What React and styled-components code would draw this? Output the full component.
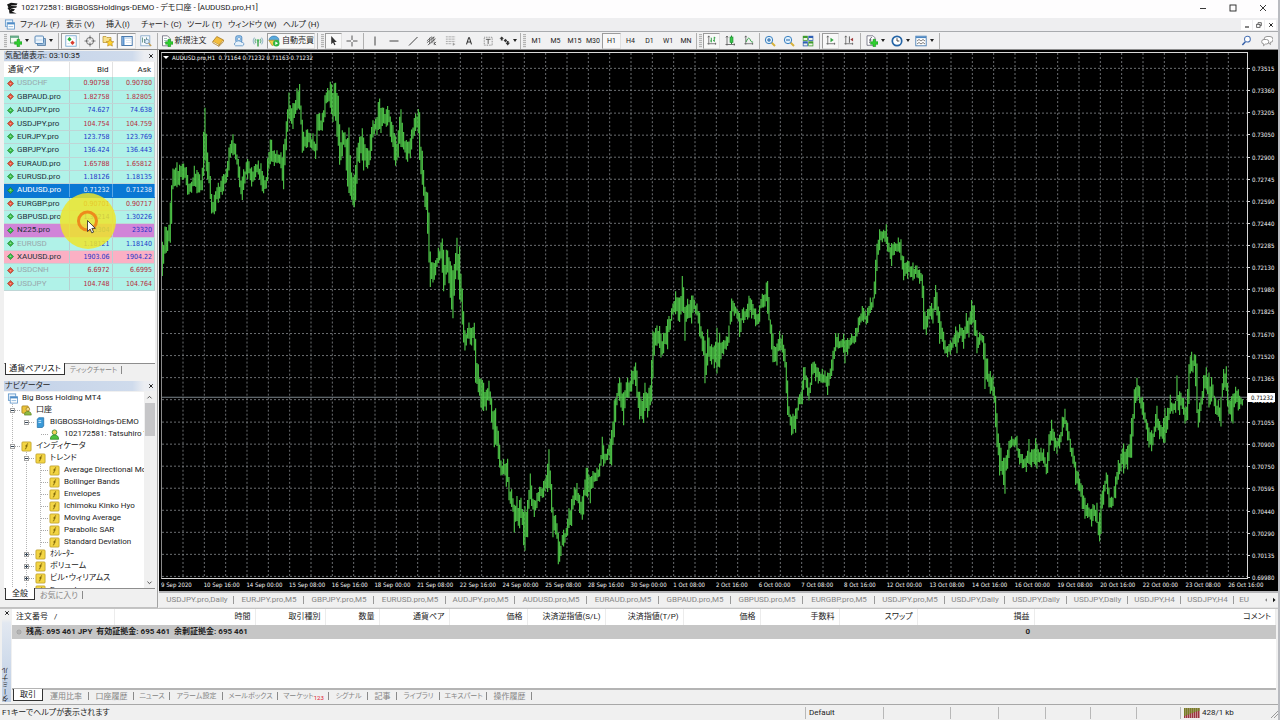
import React from 'react';
import styled, { createGlobalStyle, css } from 'styled-components';

const UI = "Roboto, 'Noto Sans CJK JP', sans-serif";
const SMALL = "'DejaVu Sans Condensed', 'DejaVu Sans', sans-serif";

const Global = createGlobalStyle`
  * { box-sizing: border-box; }
  body {
    margin: 0;
    background: #f0f0f0;
    font-family: ${UI};
    font-size: 8px;
    line-height: 12px;
    color: #222;
    font-feature-settings: 'palt';
  }
  button { font: inherit; font-feature-settings: inherit; color: inherit; border: 0; margin: 0; padding: 0; background: none; white-space: nowrap; }
  ul { list-style: none; margin: 0; padding: 0; }
  svg { display: block; flex: none; }
`;

/* ---------- window shell ---------- */

const Window = styled.div`
  display: flex;
  flex-direction: column;
  min-height: 100vh;
  overflow: hidden;
  border-right: 2px solid #b9bbc0;
`;

const TitleBar = styled.header`
  display: flex;
  align-items: center;
  height: 18px;
  padding: 0 0 2px 6px;
  background: #fefdfe;
`;

const TitleText = styled.h1`
  flex: 1;
  margin: 0 0 0 3px;
  font-size: 8px;
  font-weight: 400;
  line-height: 16px;
  white-space: nowrap;
`;

const CaptionButton = styled.button`
  display: grid;
  place-items: center;
  width: 30px;
  height: 16px;
`;

const MenuBar = styled.nav`
  display: flex;
  align-items: center;
  height: 13px;
  padding: 0 2px 0 4px;
  background: #eeeef0;
`;

const MenuButton = styled.button`
  width: ${(p) => p.$w}px;
  text-align: left;
  line-height: 12px;
`;

const MdiButton = styled.button`
  display: grid;
  place-items: center;
  width: 11px;
  height: 10px;
  margin-left: 1px;
  background: #fff;
`;

const Spacer = styled.div`flex: 1;`;

const ToolBar = styled.div`
  display: flex;
  align-items: center;
  height: 19px;
  padding-left: 3px;
  border-top: 1px solid #a9abae;
  border-bottom: 1px solid #8c8c8c;
  background: #f1f1f2;
`;

const Grip = styled.span`
  flex: none;
  width: 3px;
  height: 14px;
  margin: 0 1px;
  background: repeating-linear-gradient(#b4b4b4 0 1px, #e6e6e6 1px 2px);
`;

const Separator = styled.span`
  flex: none;
  width: 1px;
  height: 16px;
  margin: 0 ${(p) => p.$m ?? 2}px;
  background: #b0b0b0;
`;

const ToolButton = styled.button`
  display: flex;
  flex: none;
  align-items: center;
  justify-content: center;
  gap: ${(p) => (p.$label ? 2 : 3)}px;
  width: ${(p) => p.$w || 19}px;
  height: 16px;
  font-size: ${(p) => (p.$label ? 8 : 7)}px;
  ${(p) => p.$on && css`
    border: 1px solid #e0e0e0;
    border-top-color: #9c9c9c;
    border-left-color: #9c9c9c;
    background: #f8f8f8;
  `}
`;

const Caret = styled.i`
  width: 0;
  height: 0;
  border: 2px solid transparent;
  border-top: 3px solid #222;
  border-bottom: 0;
`;

/* ---------- side panels ---------- */

const Main = styled.main`
  display: flex;
  flex: 1;
`;

const Side = styled.aside`
  display: flex;
  flex-direction: column;
  width: 158px;
  flex: none;
  padding: 1px 2px 6px 4px;
  border-right: 1px solid #a2a2a2;
  border-bottom: 1px solid #c2c2c2;
  background: #f0f0f0;
`;

const Panel = styled.section`
  display: flex;
  flex-direction: column;
  min-height: 0;
  flex: ${(p) => (p.$grow ? '1 0 auto' : 'none')};
  margin-top: ${(p) => p.$gap || 0}px;
`;

const PanelCaption = styled.div`
  display: flex;
  align-items: center;
  justify-content: space-between;
  height: 10px;
  padding-left: 1px;
  background: linear-gradient(90deg, #c3d2e8, #cfdbec 85%, #eceef2 93%);
`;

const PanelTitle = styled.h2`
  margin: 0;
  font-size: 8px;
  font-weight: 400;
  line-height: 10px;
  white-space: nowrap;
`;

const CloseButton = styled.button`
  display: grid;
  place-items: center;
  width: 8px;
  height: 8px;
`;

const WhiteBox = styled.div`
  display: flex;
  flex: 1;
  min-height: 0;
  margin-top: 1px;
  background: #fff;
  border-bottom: 1px solid #8e8e8e;
`;

const QuoteTable = styled.table`
  width: 100%;
  align-self: flex-start;
  table-layout: fixed;
  border-collapse: collapse;
`;

const QuoteHead = styled.th`
  width: ${(p) => p.$w};
  height: 15px;
  padding: 0 3px 0 4px;
  font-weight: 400;
  text-align: ${(p) => (p.$num ? 'right' : 'left')};
  line-height: 13px;
  border-right: 1px solid #e2e2e2;
`;

const QuoteRow = styled.tr`
  height: 13px;
  &:nth-child(3n) { height: 14px; }
  background: ${(p) => p.$bg};
`;

const QuoteCell = styled.td`
  padding: 0 2px 0 0;
  line-height: 12px;
  white-space: nowrap;
  font-family: ${(p) => (p.$num ? SMALL : UI)};
  font-size: ${(p) => (p.$num ? 7 : 8)}px;
  text-align: ${(p) => (p.$num ? 'right' : 'left')};
  color: ${(p) => p.$c};
  border-right: 1px solid ${(p) => (p.$sel ? '#5aa6e6' : '#b9cfd0')};
  border-bottom: 1px solid ${(p) => (p.$sel ? '#0a78d4' : '#bfd6d6')};
`;

const SymbolName = styled.span`
  display: flex;
  align-items: center;
  gap: 3px;
  padding-left: 3px;
`;

const PanelTabs = styled.div`
  display: flex;
  height: 12px;
  padding-left: 1px;
`;

const PanelTab = styled.button`
  height: 12px;
  width: ${(p) => p.$w}px;
  line-height: 11px;
  font-size: ${(p) => (p.$small ? 7 : 8)}px;
  color: ${(p) => (p.$on ? '#111' : '#858585')};
  ${(p) => p.$on
    ? css`
        margin-top: -1px;
        background: #fff;
        border: 1px solid #333;
        border-top: 0;
      `
    : css`
        background: linear-gradient(#8a8a8a, #8a8a8a) right center / 1px 8px no-repeat;
      `}
`;

const Tree = styled.ul`
  flex: 1;
  height: 196px;
  overflow: hidden;
`;

const TreeItem = styled.li`
  display: flex;
  align-items: center;
  height: 12px;
  padding-left: 3px;
  white-space: nowrap;
`;

const Guide = styled.span`
  position: relative;
  flex: none;
  width: 14px;
  height: 12px;
  background: ${(p) => (p.$line
    ? 'repeating-linear-gradient(#b5b5b5 0 1px, transparent 1px 2px) 5px 0 / 1px 100% no-repeat'
    : 'none')};
  ${(p) => p.$branch && css`
    &::after {
      content: '';
      position: absolute;
      left: 6px;
      right: 1px;
      top: 6px;
      border-top: 1px dotted #a8a8a8;
    }
  `}
`;

const Expander = styled.button`
  position: absolute;
  z-index: 1;
  left: 3px;
  top: 4px;
  width: 5px;
  height: 5px;
  outline: 1px solid #a4a4a4;
  outline-offset: -1px;
  background:
    linear-gradient(#345, #345) center / 3px 1px no-repeat,
    ${(p) => (p.$plus ? 'linear-gradient(#345, #345) center / 1px 3px no-repeat,' : '')}
    #fff;
`;

const TreeLabel = styled.span`
  margin-left: 4px;
`;

const ScrollBar = styled.div`
  display: flex;
  flex-direction: column;
  align-items: center;
  width: 11px;
  background: #f0f0f0;
`;

const Thumb = styled.div`
  width: 10px;
  height: 33px;
  margin-bottom: auto;
  background: #c6c6c8;
`;

const ScrollButton = styled.button`
  display: grid;
  place-items: center;
  width: 11px;
  height: 11px;
`;

/* ---------- chart ---------- */

const Work = styled.div`
  display: flex;
  flex-direction: column;
  flex: 1;
  min-width: 0;
  padding-left: 1px;
`;

const ChartFrame = styled.section`
  display: grid;
  flex: 1;
  grid-template-columns: 1fr 30px;
  grid-template-rows: 1fr 12px;
  padding: 2px 0 0 2px;
  background: #000;
  border-bottom: 2px solid #b5b5b8;
  font-family: ${SMALL};
  font-size: 6px;
  line-height: 9px;
  color: #f8f8f8;
`;

const Plot = styled.div`
  position: relative;
  grid-area: 1 / 1;
  min-height: 525px;
  border: 1px solid #d8d8d8;
  border-left-color: #8a8a8a;
`;

const PlotSvg = styled.svg`
  position: absolute;
  inset: 0;
  width: 100%;
  height: 100%;
`;

const ChartTitle = styled.div`
  position: absolute;
  top: 0;
  left: 1px;
  display: flex;
  align-items: center;
  gap: 3px;
  white-space: pre;
`;

const WhiteCaret = styled(Caret)`
  border-width: 3px;
  border-top: 3px solid #fff;
  border-bottom: 0;
`;

const PriceAxis = styled.ol`
  grid-area: 1 / 2;
  display: flex;
  flex-direction: column;
  justify-content: space-between;
  list-style: none;
  margin: 0 0 -3px;
  padding: 12px 0 0;
`;

const PriceLabel = styled.li`
  display: flex;
  align-items: center;
  gap: 2px;
  &::before { content: ''; width: 2px; height: 1px; background: #ddd; }
`;

const PriceFlag = styled.div`
  position: absolute;
  left: 100%;
  top: 65%;
  width: 28px;
  padding-left: 4px;
  margin-top: -1px;
  background: #fff;
  color: #000;
`;

const TimeAxis = styled.ol`
  grid-area: 2 / 1 / 3 / 3;
  display: flex;
  list-style: none;
  margin: 0 7px 0 0;
  padding: 0;
  line-height: 11px;
`;

const TimeLabel = styled.li`
  flex: 1 1 0;
  min-width: 0;
  white-space: nowrap;
`;

const ChartTabs = styled.div`
  display: flex;
  align-items: center;
  height: 15px;
  padding-left: 1px;
  border-bottom: 1px solid #e2e2e2;
  background: #f0f0f0;
  overflow: hidden;
`;

const ChartTab = styled.button`
  flex: none;
  width: ${(p) => p.$w}px;
  color: #858585;
  line-height: 12px;
  background: linear-gradient(#9a9a9a, #9a9a9a) right center / ${(p) => (p.$last ? 0 : 1)}px 8px no-repeat;
`;

/* ---------- terminal ---------- */

const Terminal = styled.section`
  display: flex;
  border-top: 1px solid #c4c4c4;
  border-bottom: 1px solid #a8a8a8;
  padding: 0 2px 2px 2px;
`;

const TerminalRail = styled.div`
  display: flex;
  flex-direction: column;
  align-items: center;
  justify-content: space-between;
  width: 9px;
  margin-right: 1px;
  background: linear-gradient(#f0f0f0 10px, #e2e8f1 14px, #bccde4);
`;

const TerminalName = styled.h2`
  margin: 0;
  writing-mode: vertical-rl;
  transform: rotate(180deg);
  font-size: 7px;
  font-weight: 400;
  line-height: 9px;
`;

const TerminalBody = styled.div`
  display: flex;
  flex: 1;
  flex-direction: column;
  min-width: 0;
`;

const OrdersBox = styled.div`
  height: 81px;
  background: #fff;
  border-bottom: 2px solid #b4b4b4;
`;

const OrdersTable = styled.table`
  width: 100%;
  table-layout: fixed;
  border-collapse: collapse;
`;

const OrdersHead = styled.th`
  width: ${(p) => (p.$w ? `${p.$w}px` : 'auto')};
  height: 16px;
  padding: 0 4px;
  text-align: ${(p) => (p.$left ? 'left' : 'right')};
  font-weight: 400;
  line-height: 14px;
  border-right: 1px solid #ececec;
  white-space: pre;
`;

const SummaryRow = styled.tr`
  height: 14px;
  background: #c6c6c6;
  font-weight: 700;
`;

const SummaryCell = styled.td`
  padding: 0 4px;
  text-align: ${(p) => (p.$num ? 'right' : 'left')};
  white-space: pre;
`;

const Summary = styled.span`
  display: flex;
  align-items: center;
  gap: 4px;
`;

const Count = styled.sub`
  font-size: 6px;
  line-height: 6px;
  color: #e02030;
`;

const StatusBar = styled.footer`
  display: flex;
  align-items: center;
  height: 15px;
  background: #f0f0f0;
`;

const StatusCell = styled.div`
  display: flex;
  align-items: center;
  gap: 2px;
  width: ${(p) => (p.$w ? `${p.$w}px` : 'auto')};
  flex: ${(p) => (p.$w ? 'none' : 1)};
  height: 12px;
  padding-left: ${(p) => (p.$w ? 3 : 1)}px;
  white-space: nowrap;
  border-left: 1px solid ${(p) => (p.$w ? '#b8b8b8' : 'transparent')};
`;

const Highlight = styled.svg`
  position: absolute;
  left: 58px;
  top: 191px;
  pointer-events: none;
`;

/* ---------- icons, all on a 12 unit square ---------- */

const fBadge = (
  <>
    <rect x="1" y="1" width="10" height="10" rx="1" fill="#f3d545" stroke="#b99a22" strokeWidth=".8" />
    <path d="M7.8 3.2C6.4 2.8 6.3 4 6 5.4S5.6 9.2 4.2 8.8M4.6 5.4h2.8" fill="none" stroke="#6d5500" strokeWidth=".9" />
  </>
);

const axes = <path d="M3 1v9.5M1.5 9.5h9.5M2 2.5L3 1l1 1.5M9.8 8.5l1.2 1-1.2 1" fill="none" stroke="#555" strokeWidth=".8" />;
const plus = <path d="M7 4.300h2.600v2.400H12v2.600H9.600v2.400H7V9.300H4.600V6.700H7z" fill="#2fcf2f" stroke="#128a1a" strokeWidth=".5" />;

const ICONS = {
  app: (
    <g fill="#151515">
      <path d="M1 2.500L5 .8l6.500.6-1 1.800-5 .3-3 2zM1.500 6l3.500-2 6 .2-.8 1.500-4 .3-3 2.600z" />
      <path d="M3 8.500L6 6.500l3 .7L7.600 9l-2 .5 5 2H3.500z" />
    </g>
  ),
  windows: (
    <>
      <rect x="1.500" y="1" width="8" height="7" fill="#e9f3fc" stroke="#5f95c8" strokeWidth=".9" />
      <rect x="3.500" y="4" width="8" height="7" fill="#fff" stroke="#5f95c8" strokeWidth=".9" />
      <path d="M3.500 5h8" stroke="#4e8cc7" strokeWidth="1.800" />
      <path d="M5 8.300h5" stroke="#8fb8dc" />
    </>
  ),
  newChart: (
    <>
      <rect x=".5" y="1" width="8" height="7" fill="#f4faf2" stroke="#5a9a70" strokeWidth=".8" />
      <path d="M.5 2h8" stroke="#4c9e78" strokeWidth="1.500" />
      {plus}
    </>
  ),
  profiles: (
    <>
      <path d="M3.500 3.500h8v7h-8z" fill="#9bbcdc" stroke="#52799e" strokeWidth=".8" />
      <rect x="1" y="1" width="8.500" height="7.500" rx="1" fill="#eaf3fb" stroke="#4d7fb0" strokeWidth=".9" />
      <path d="M2 5h6.500" stroke="#b9d2ea" />
    </>
  ),
  watch: (
    <>
      <rect x=".8" y=".8" width="10.400" height="10.400" fill="#fff" stroke="#68a0cc" strokeWidth=".8" />
      <path d="M4.500 2l2.200 2.200-2.200 2.200-2.200-2.200z" fill="#25b03c" />
      <path d="M7.500 5.500l2.200 2.200-2.200 2.200-2.200-2.200z" fill="#d83c2c" />
      <path d="M8 3h2M2.500 8.500h2" stroke="#c4d6e4" strokeWidth=".8" />
    </>
  ),
  target: <g fill="none" stroke="#555" strokeWidth=".8"><circle cx="6" cy="6" r="3.600" /><path d="M6 .5v4M6 7.500v4M.5 6h4M7.500 6h4" /></g>,
  folderStar: (
    <>
      <path d="M1 1.500h3l1 1h4v5H1z" fill="#f8e08a" stroke="#b48e28" strokeWidth=".7" />
      <path d="M8 4l1.200 2.400 2.600.3-1.900 1.800.5 2.600L8 9.900l-2.400 1.200.5-2.600-1.900-1.800 2.600-.3z" fill="#ffd22e" stroke="#b08216" strokeWidth=".6" />
    </>
  ),
  terminal: (
    <>
      <rect x=".8" y="1.500" width="10.400" height="9" fill="#fff" stroke="#3a6ea5" strokeWidth=".9" />
      <path d="M1.300 2h2.200v8H1.300z" fill="#5b94d0" />
      <path d="M4 3h7" stroke="#9cc0e2" /><path d="M5 5.500h5M5 7.500h5" stroke="#d4e2f0" strokeWidth=".7" />
    </>
  ),
  tester: (
    <>
      <rect x=".8" y=".8" width="9" height="10" fill="#f5f9fd" stroke="#7fa3c6" strokeWidth=".8" />
      <path d="M2.500 2.500v5M4.500 4v4M6.500 2.500v3" stroke="#6f9b8c" />
      <circle cx="7" cy="6.500" r="2.200" fill="#dcecf8" stroke="#6d8dac" strokeWidth=".8" />
      <path d="M8.600 8.200l2.600 2.800" stroke="#c39a4a" strokeWidth="1.200" />
    </>
  ),
  order: (
    <>
      <path d="M1.500.8h5l2.500 2.500v7.500h-7.500z" fill="#fff" stroke="#667" strokeWidth=".8" />
      <path d="M3 3.500h3M3 5.500h4M3 7.500h2" stroke="#8aa" strokeWidth=".7" />
      {plus}
    </>
  ),
  book: <><path d="M.8 6.500l4-5 6.800 3.500-4.600 5z" fill="#f2bd3d" stroke="#9d6d12" strokeWidth=".7" /><path d="M.8 6.500v1.300l6.200 3.500V10M7 11.300L11.600 6.500V5" fill="#fff3cf" stroke="#9d6d12" strokeWidth=".7" /></>,
  cloud: (
    <>
      <rect x="2.800" y=".8" width="6" height="6.500" rx="1.500" fill="#9cc9ef" stroke="#3d7ab5" strokeWidth=".8" />
      <circle cx="6" cy="4" r="1.500" fill="#fff" stroke="#3d7ab5" strokeWidth=".5" />
      <path d="M2.500 10.800a2 2 0 010-3.500 3.500 3 0 016 0 1.800 1.800 0 011 3.500z" fill="#e6f1fb" stroke="#5b8fc2" strokeWidth=".8" />
    </>
  ),
  signal: (
    <g fill="none" strokeWidth="1.100">
      <path d="M2.600 9.400a4.800 4.800 0 010-6.800M9.400 2.600a4.800 4.800 0 010 6.800" stroke="#9dbccb" />
      <path d="M4 8a2.900 2.900 0 010-4M8 4a2.900 2.900 0 010 4" stroke="#6fb08c" />
      <path d="M6 6v5.500" stroke="#3aa04a" strokeWidth="1.400" /><circle cx="6" cy="5.500" r="1.300" fill="#4bb85c" stroke="none" />
    </g>
  ),
  auto: (
    <>
      <path d="M1 5.500C1 2.500 3.500 1 6 1s5 1.500 5 4.500H1z" fill="#58a9dd" stroke="#2b6fa4" strokeWidth=".6" />
      <path d="M.8 5.200h9L7 9.500 4 10.500z" fill="#f3cf48" stroke="#a8841c" strokeWidth=".6" />
      <circle cx="8.300" cy="8.300" r="3.200" fill="#2fb541" /><path d="M7.300 6.500v3.600l2.800-1.800z" fill="#fff" />
    </>
  ),
  cursor: <path d="M3.500 1v9l2-1.900 1.400 3 1.300-.6-1.400-2.900h2.800z" fill="#333" />,
  cross: <path d="M6 .5v4.500M6 7v4.500M.5 6H5M7 6h4.500" stroke="#444" strokeWidth=".9" />,
  vline: <path d="M6 1.500v9" stroke="#444" />,
  hline: <path d="M1.500 6h9" stroke="#444" />,
  trend: <path d="M2 10.500L10.500 2" stroke="#444" />,
  channel: <g fill="none" stroke="#444" strokeWidth=".8"><path d="M1 8.500L9 2M2 11L10.500 4M1 6.500L6 2M4 3v7M6.500 2v7M8.500 2v5" /><path d="M9 7.500v3.500M9 9.500l2-2M9 9l2 2" /></g>,
  fibo: <g stroke="#777" strokeWidth=".8" strokeDasharray="1 .6"><path d="M1 2h10M1 4.500h10M1 7h10M1 9.500h6" /><path d="M9 8.500v3M9 10h2" strokeDasharray="none" /></g>,
  letter: <path d="M3 10L5.600 2h.9L9 10M4 7.200h4" fill="none" stroke="#333" strokeWidth="1.300" />,
  textBox: <g fill="none" stroke="#444"><rect x="1.500" y="1.500" width="9.500" height="9.500" strokeWidth=".8" strokeDasharray="1 1" /><path d="M3.500 4h5.500M6.200 4v5.500" /></g>,
  shapes: <g fill="#333"><path d="M3 1.500L5.500 4H4v2H2V4H.5zM5 6l2-2 2 2-2 2z" /><path d="M8.500 6.500v2H7L9.500 11.500 12 8.500h-1.500v-2z" /></g>,
  bars: <>{axes}<path d="M5.800 3v5M4.600 6.500h1.200M9 2v5.500M9 3h1.200M7.800 6H9" stroke="#249a38" fill="none" /></>,
  candles: <>{axes}<path d="M7.500.5v8.500" stroke="#1c8a2e" /><rect x="6" y="2" width="3" height="5.500" fill="#37c44b" stroke="#1c8a2e" strokeWidth=".6" /></>,
  line: <>{axes}<path d="M3.500 7.500C5.500 2 7 3 8 5.500s2 2 3 2.200" stroke="#249a38" fill="none" /></>,
  zoomIn: <><path d="M7.500 7.500l3.500 3.500" stroke="#d8b23a" strokeWidth="2" /><circle cx="5" cy="5" r="3.700" fill="#dff0fc" stroke="#3a80c0" /><path d="M3 5h4M5 3v4" stroke="#2265a8" /></>,
  zoomOut: <><path d="M7.500 7.500l3.500 3.500" stroke="#d8b23a" strokeWidth="2" /><circle cx="5" cy="5" r="3.700" fill="#dff0fc" stroke="#3a80c0" /><path d="M3 5h4" stroke="#2265a8" /></>,
  tile: (
    <>
      <path d="M.8.8h5v5h-5z" fill="#3f9b2e" /><path d="M6.300.8h5v5h-5z" fill="#2d5fb4" />
      <path d="M.8 6.300h5v5h-5z" fill="#2d5fb4" /><path d="M6.300 6.300h5v5h-5z" fill="#3f9b2e" />
      <path d="M1.500 3h3.600v2H1.500zM7 3h3.600v2H7zM1.500 8.500h3.600v2H1.500zM7 8.500h3.600v2H7z" fill="#eef4e6" />
    </>
  ),
  scroll: <>{axes}<path d="M6 3v5l3.500-2.500z" fill="#2fa63e" /></>,
  shift: <>{axes}<path d="M7 1.500v7" stroke="#555" /><path d="M11 3v4L8 5z" fill="#a03a3a" /></>,
  indicator: (
    <>
      <path d="M1 .8h6l2 2v7.500H1z" fill="#fff" stroke="#667" strokeWidth=".8" />
      <path d="M5.800 2.500C4.500 2.300 4.500 3.500 4.300 5S4 8 3 7.800M3 5h2.500" fill="none" stroke="#445" strokeWidth=".8" />
      {plus}
    </>
  ),
  clock: <><circle cx="6" cy="6" r="4.700" fill="#fff" stroke="#2464a6" strokeWidth="1.700" /><path d="M6 3.200V6h2.300" fill="none" stroke="#333" strokeWidth=".9" /></>,
  template: <><rect x=".8" y="1.200" width="10.400" height="9.600" fill="#fff" stroke="#4a7fb4" strokeWidth=".9" /><path d="M1 2.300h10" stroke="#4a86c2" strokeWidth="1.600" /><path d="M2 6l2-1.500L6 6l2-1.500L10 6M2 9l2-1.500L6 9l2-1.500L10 9" fill="none" stroke="#444" strokeWidth=".7" /></>,
  search: <><path d="M5 7L1.500 11" stroke="#3560a8" strokeWidth="1.600" /><circle cx="7" cy="4.500" r="3.200" fill="#fff" stroke="#4a72b4" strokeWidth="1.100" /></>,
  chat: <g fill="#fff" stroke="#8c8c8c" strokeWidth=".9"><path d="M6 1.500h3a2.500 2.500 0 010 6l.5 2-2.500-2H6a3 3 0 010-6z" /><path d="M3 4.500h2.500a2.200 2.200 0 010 4.500H4.500l-2 1.800.3-1.900A2.200 2.200 0 013 4.500z" /></g>,
  minimize: <path d="M3 6.500h6" stroke="#222" strokeWidth=".9" />,
  maximize: <rect x="3" y="3" width="6" height="6" fill="none" stroke="#222" strokeWidth=".9" />,
  restore: <g fill="none" stroke="#444" strokeWidth="1.200"><path d="M4.500 4.500v-2h5v4.500h-2" /><rect x="2.500" y="5" width="5" height="4.500" /></g>,
  close: <path d="M3 3l6 6M9 3l-6 6" stroke="#222" strokeWidth=".9" />,
  closeBold: <path d="M2.500 2.500l7 7M9.500 2.500l-7 7" stroke="#222" strokeWidth="2" />,
  minBold: <path d="M3 9h6" stroke="#333" strokeWidth="1.800" />,
  up: <path d="M2.500 7.500L6 4l3.500 3.500" fill="none" stroke="#444" strokeWidth="1.600" />,
  down: <path d="M2.500 4.500L6 8l3.500-3.500" fill="none" stroke="#444" strokeWidth="1.600" />,
  gain: <><path d="M6 .8L11.200 6 6 11.200.8 6z" fill="#35b944" stroke="#17752a" strokeWidth="1" /><path d="M6 4L8 6.500H4z" fill="#a5eaac" /></>,
  loss: <><path d="M6 .8L11.200 6 6 11.200.8 6z" fill="#e0503a" stroke="#9a2c1c" strokeWidth="1" /><path d="M6 8L8 5.500H4z" fill="#ffb4a4" /></>,
  accounts: <><rect x="1" y="1" width="7" height="8" rx="1" fill="#e9c23a" stroke="#a17c14" strokeWidth=".8" /><circle cx="7.500" cy="4.500" r="2" fill="#f5dc86" stroke="#94701a" strokeWidth=".7" /><path d="M3.800 11c0-3 1.500-4 3.700-4s3.700 1 3.700 4z" fill="#8fb844" stroke="#54801c" strokeWidth=".7" /></>,
  server: <><path d="M2.500 2.500L4 .8h5.500v9L8 11.500H2.500z" fill="#3a9ad8" stroke="#1f6ca6" strokeWidth=".8" /><path d="M3.800 4h3M3.800 6h3" stroke="#cdeaff" /></>,
  user: <><circle cx="6" cy="3.600" r="2.600" fill="#f2d05a" stroke="#3b8a30" strokeWidth=".9" /><path d="M1.500 11.200c0-3.500 2-4.700 4.500-4.700s4.500 1.200 4.500 4.700z" fill="#4cc23f" stroke="#2a8422" strokeWidth=".8" /></>,
  func: fBadge,
  dot: <g fill="none" stroke="#888" strokeWidth="1.200"><circle cx="6" cy="6" r="4" /><path d="M4 6h4" /></g>,
  left: <path d="M8 2.500v7L4 6z" fill="#888" />,
  right: <path d="M4 1.500v9L9 6z" fill="#111" />,
};

const Icon = ({ n, s = 12 }) => (
  <svg width={s} height={s} viewBox="0 0 12 12" aria-hidden="true">{ICONS[n]}</svg>
);

const Tool = ({ n, s, label, text, menu, on, w }) => (
  <ToolButton $w={w} $on={on} $label={!!text} aria-label={label} aria-pressed={on ? true : undefined}>
    {n && <Icon n={n} s={s} />}
    {text}
    {menu && <Caret />}
  </ToolButton>
);

/* ---------- data ---------- */

const MENUS = [['ファイル (F)', 46], ['表示 (V)', 40], ['挿入(I)', 35], ['チャート (C)', 46], ['ツール (T)', 41], ['ウィンドウ (W)', 55], ['ヘルプ (H)', 40]];

const QUOTES = [
  ['USDCHF', '0.90758', '0.90780', 0, 'off'],
  ['GBPAUD.pro', '1.82758', '1.82805', 0],
  ['AUDJPY.pro', '74.627', '74.638', 1],
  ['USDJPY.pro', '104.754', '104.759', 0],
  ['EURJPY.pro', '123.758', '123.769', 1],
  ['GBPJPY.pro', '136.424', '136.443', 1],
  ['EURAUD.pro', '1.65788', '1.65812', 0],
  ['EURUSD.pro', '1.18126', '1.18135', 1],
  ['AUDUSD.pro', '0.71232', '0.71238', 1, 'sel'],
  ['EURGBP.pro', '0.90701', '0.90717', 0],
  ['GBPUSD.pro', '1.30214', '1.30226', 1],
  ['N225.pro', '23304', '23320', 1, 'violet'],
  ['EURUSD', '1.18121', '1.18140', 1, 'off'],
  ['XAUUSD.pro', '1903.06', '1904.22', 1, 'pink'],
  ['USDCNH', '6.6972', '6.6995', 0, 'off'],
  ['USDJPY', '104.748', '104.764', 0, 'off'],
];
const ROW_BG = { sel: '#0a78d4', violet: '#d184d8', pink: '#fbb0c4' };

/* depth, icon, label, expander, guide columns that continue below */
const TREE = [
  [0, 'windows', 'Big Boss Holding MT4', '', []],
  [1, 'accounts', '口座', '-', [0]],
  [2, 'server', 'BIGBOSSHoldings-DEMO', '-', [0]],
  [3, 'user', '102172581: Tatsuhiro Y.', '', [0]],
  [1, 'func', 'インディケータ', '-', [0]],
  [2, 'func', 'トレンド', '-', [0, 1]],
  [3, 'func', 'Average Directional Mo', '', [0, 1, 2]],
  [3, 'func', 'Bollinger Bands', '', [0, 1, 2]],
  [3, 'func', 'Envelopes', '', [0, 1, 2]],
  [3, 'func', 'Ichimoku Kinko Hyo', '', [0, 1, 2]],
  [3, 'func', 'Moving Average', '', [0, 1, 2]],
  [3, 'func', 'Parabolic SAR', '', [0, 1, 2]],
  [3, 'func', 'Standard Deviation', '', [0, 1, 2]],
  [2, 'func', 'ｵｼﾚｰﾀｰ', '+', [0, 1]],
  [2, 'func', 'ボリューム', '+', [0, 1]],
  [2, 'func', 'ビル・ウィリアムス', '+', [0, 1]],
  [2, 'func', 'Examples', '+', [0, 1]],
];

const PRICES = ['0.73515', '0.73360', '0.73205', '0.73050', '0.72900', '0.72745', '0.72590', '0.72440', '0.72285', '0.72130', '0.71980', '0.71825', '0.71670', '0.71520', '0.71365', '0.71210', '0.71055', '0.70900', '0.70750', '0.70595', '0.70440', '0.70290', '0.70135', '0.69980'];

const TIMES = ['9 Sep 2020', '10 Sep 16:00', '14 Sep 00:00', '15 Sep 08:00', '16 Sep 16:00', '18 Sep 00:00', '21 Sep 08:00', '22 Sep 16:00', '24 Sep 00:00', '25 Sep 08:00', '28 Sep 16:00', '30 Sep 00:00', '1 Oct 08:00', '2 Oct 16:00', '6 Oct 00:00', '7 Oct 08:00', '8 Oct 16:00', '12 Oct 00:00', '13 Oct 08:00', '14 Oct 16:00', '16 Oct 00:00', '19 Oct 08:00', '20 Oct 16:00', '22 Oct 00:00', '23 Oct 08:00', '26 Oct 16:00'];

const CHART_TABS = [['USDJPY.pro,Daily', 74], ['EURJPY.pro,M5', 70], ['GBPJPY.pro,M5', 70], ['EURUSD.pro,M5', 72], ['AUDJPY.pro,M5', 69], ['AUDUSD.pro,M5', 72], ['EURAUD.pro,M5', 72], ['GBPAUD.pro,M5', 72], ['GBPUSD.pro,M5', 72], ['EURGBP.pro,M5', 72], ['USDJPY.pro,M5', 70], ['USDJPY,Daily', 60], ['USDJPY,Daily', 62], ['USDJPY,Daily', 61], ['USDJPY,H4', 53], ['USDJPY,H4', 53]];

const ORDER_COLUMNS = [['注文番号   /', 102], ['時間', 141], ['取引種別', 70], ['数量', 54], ['通貨ペア', 70], ['価格', 78], ['決済逆指値(S/L)', 78], ['決済指値(T/P)', 78], ['価格', 77], ['手数料', 79], ['スワップ', 78], ['損益', 117], ['コメント', 0]];

const TERMINAL_TABS = [['運用比率', 46], ['口座履歴', 45], ['ニュース', 36, 1], ['アラーム設定', 53, 1], ['メールボックス', 55, 1], ['マーケット', 51, 1], ['シグナル', 39, 1], ['記事', 29], ['ライブラリ', 43, 1], ['エキスパート', 47, 1], ['操作履歴', 45]];

/* price envelope: x, high, low in plot units */
const ENVELOPE = `162,243,278 165,226,253 167,227,252 168,232,250 171,193,240 173,168,188 175,170,185 177,162,187 180,165,185 183,163,178 186,165,183 188,177,197 192,182,192 194,165,185 197,170,193 199,173,192 202,178,193 203,143,183 205,107,160 207,148,177 209,162,183 211,183,207 212,200,217 215,193,213 218,183,203 223,175,193 227,167,180 229,147,170 233,134,155 236,145,160 239,163,183 242,178,202 244,167,187 248,158,178 252,168,187 255,165,178 258,160,173 261,163,185 263,175,194 267,177,187 268,147,177 271,137,160 274,150,166 277,150,163 281,152,168 283,160,187 284,135,190 287,117,138 289,92,118 293,103,129 297,88,110 298,93,108 300,82,110 302,117,153 304,135,150 307,128,147 310,133,147 313,133,150 316,145,160 317,113,150 320,113,128 322,115,132 325,95,117 328,87,100 331,80,110 333,93,122 335,78,113 337,93,137 339,97,150 340,140,173 342,130,157 345,132,147 347,143,183 349,127,193 351,170,197 353,177,205 355,173,208 357,147,183 360,135,160 362,126,158 364,140,173 367,150,165 368,147,170 371,130,157 373,120,137 377,117,135 379,94,127 381,108,133 383,107,122 386,110,127 388,105,125 391,120,140 393,125,147 395,137,167 398,133,160 400,113,140 401,109,147 403,130,147 407,142,162 410,140,160 412,127,147 415,115,132 418,108,127 420,113,167 423,162,190 425,187,207 428,193,237 429,213,263 430,250,287 433,262,282 435,263,278 438,248,263 441,242,258 443,236,280 444,257,297 447,247,267 449,257,283 451,263,305 453,270,318 455,260,283 457,237,270 460,247,303 462,283,320 464,317,347 465,330,350 469,322,338 471,330,347 474,318,337 475,332,380 478,362,390 481,378,407 483,380,410 486,390,411 489,380,400 492,400,425 494,410,447 496,407,443 499,437,463 501,460,475 504,458,473 506,463,487 508,457,480 509,477,500 512,490,507 514,505,533 517,495,520 519,500,532 521,497,517 524,513,548 525,505,550 527,507,547 530,470,497 532,488,507 534,500,517 537,492,507 540,485,500 543,482,497 547,470,493 549,448,487 551,472,500 553,507,537 556,515,533 558,530,564 560,543,560 563,530,547 567,523,538 569,507,527 572,497,525 574,487,505 577,482,500 579,493,510 582,497,520 584,487,512 586,467,495 588,467,497 590,477,504 593,470,487 597,467,480 600,462,475 602,434,457 604,447,467 607,450,458 610,440,463 612,427,465 614,400,440 616,397,417 619,375,397 621,382,407 624,393,427 627,375,397 629,382,397 632,368,390 635,358,380 637,370,397 639,390,417 643,397,428 645,382,410 647,395,420 649,387,410 651,373,412 653,330,377 657,325,345 659,322,343 661,333,357 664,332,352 666,327,343 668,317,350 671,310,323 673,303,314 675,289,312 678,297,320 680,297,322 682,273,310 684,290,313 685,307,341 688,297,315 691,295,328 693,295,312 697,303,315 699,307,333 702,330,347 705,340,383 707,340,373 708,322,360 711,343,363 714,347,367 717,327,373 720,333,366 723,340,355 726,337,350 729,325,342 731,297,323 734,302,315 737,308,318 740,313,339 743,307,323 747,307,320 749,295,317 752,300,318 755,308,326 759,308,325 762,293,307 764,295,307 767,273,310 769,297,320 771,320,343 773,333,362 777,343,365 779,330,350 782,332,350 784,347,363 787,350,413 788,397,415 791,417,435 793,413,433 796,407,432 798,398,410 802,383,407 804,363,385 807,373,393 809,387,400 811,377,397 812,355,377 815,362,380 818,367,383 822,368,382 825,370,382 828,372,396 831,363,378 833,350,370 836,330,348 838,332,348 841,340,347 843,330,347 845,340,363 848,337,353 852,333,343 855,330,344 858,318,333 862,305,320 864,308,322 867,310,325 870,297,313 873,297,307 875,267,305 877,243,270 879,228,252 882,232,242 886,221,242 888,240,253 892,243,267 894,242,255 898,237,250 901,239,260 903,255,280 907,260,278 913,262,280 917,265,277 919,268,283 922,273,285 923,277,327 926,317,336 928,307,325 931,300,317 933,308,323 935,281,307 937,292,315 940,313,347 943,327,347 945,340,353 947,347,357 950,340,355 953,337,347 955,324,343 957,330,353 959,323,337 962,327,340 964,330,350 966,312,333 969,317,337 971,299,322 974,302,333 977,330,353 980,332,343 983,332,345 985,343,389 988,360,380 990,370,393 993,375,395 995,387,417 997,413,447 999,440,477 1001,447,470 1003,457,480 1005,457,493 1007,453,473 1009,440,457 1012,435,445 1017,435,450 1019,447,463 1022,453,467 1026,457,472 1029,438,463 1032,450,467 1035,435,463 1037,443,468 1041,447,460 1044,448,463 1047,460,478 1049,433,460 1052,417,437 1054,430,450 1057,440,453 1060,433,447 1062,417,437 1065,408,423 1067,418,437 1070,437,450 1073,447,463 1076,463,487 1078,470,488 1082,483,507 1085,497,518 1088,503,517 1091,510,528 1093,503,520 1097,502,522 1099,520,544 1101,493,533 1104,483,500 1107,468,487 1109,487,507 1112,497,507 1115,480,502 1118,460,480 1121,453,470 1123,442,473 1127,447,472 1130,437,457 1132,413,457 1134,390,420 1137,377,400 1139,383,400 1142,395,413 1144,403,420 1147,420,437 1149,427,447 1152,430,451 1155,417,433 1157,405,427 1159,420,438 1163,422,442 1165,407,442 1168,407,427 1170,393,413 1173,403,413 1176,400,412 1177,374,400 1179,390,415 1183,393,410 1185,407,423 1187,400,427 1189,363,403 1191,347,370 1193,360,372 1195,350,373 1197,363,413 1198,410,428 1200,400,420 1203,377,400 1206,366,387 1209,372,407 1212,377,400 1215,397,413 1218,400,415 1221,397,426 1223,370,390 1226,362,387 1228,387,410 1231,397,420 1233,393,423 1236,385,400 1238,387,410 1240,397,408 1243,397,407`
  .split(' ').map((t) => t.split(',').map(Number));

function priceBars() {
  const step = 4 / 3;
  let k = 0;
  let d = '';
  for (let i = 0; ; i += 1) {
    const x = 162.3 + i * step;
    if (x > 1243.5) break;
    while (k < ENVELOPE.length - 2 && ENVELOPE[k + 1][0] <= x) k += 1;
    const [x0, h0, l0] = ENVELOPE[k];
    const [x1, h1, l1] = ENVELOPE[k + 1];
    const t = Math.max(0, Math.min(1, (x - x0) / (x1 - x0)));
    const hi = h0 + (h1 - h0) * t;
    const lo = l0 + (l1 - l0) * t;
    const near = Math.min(Math.abs(x - x0), Math.abs(x1 - x)) < 0.7;
    const r = Math.abs(Math.sin(i * 12.9898) * 43758.5453) % 1;
    const cut = near ? 0 : (lo - hi) * 0.4;
    d += `M${x.toFixed(2)} ${(hi + cut * r).toFixed(1)}V${(lo - cut * (1 - r)).toFixed(1)}`;
  }
  return d;
}
const BARS = priceBars();

const GRID_Y = [68.33, 90.33, ...Array.from({ length: 14 }, (_, i) => 113 + 22 * i), ...Array.from({ length: 8 }, (_, i) => 421.4 + 22 * i)];
const GRID_X = Array.from({ length: 50 }, (_, i) => 183 + (i * 64) / 3);
const GRID = GRID_X.map((x) => `M${x.toFixed(2)} 53V577`).join('') + GRID_Y.map((y) => `M162 ${y}H1247`).join('');

/* ---------- sections ---------- */

const Tools = () => (
  <ToolBar role="toolbar" aria-label="標準">
    <Grip />
    <Tool n="newChart" label="新規チャート" menu w={23} />
    <Tool n="profiles" label="プロファイル" menu w={25} />
    <Separator />
    <Tool n="watch" label="気配値表示" on />
    <Tool n="target" label="データウィンドウ" />
    <Tool n="folderStar" label="ナビゲーター" on w={18} />
    <Tool n="terminal" label="ターミナル" on />
    <Tool n="tester" label="ストラテジーテスター" />
    <Separator />
    <Tool n="order" text="新規注文" w={47} />
    <Tool n="book" label="メタエディター" w={22} />
    <Tool n="cloud" label="VPS" />
    <Tool n="signal" label="シグナル" />
    <Tool n="auto" text="自動売買" on w={48} />
    <Separator />
    <Grip />
    <Tool n="cursor" label="カーソル" on s={11} w={17} />
    <Tool n="cross" label="十字カーソル" />
    <Separator />
    <Tool n="vline" label="垂直線" w={18} />
    <Tool n="hline" label="水平線" />
    <Tool n="trend" label="トレンドライン" />
    <Tool n="channel" label="チャネル" s={11} />
    <Tool n="fibo" label="フィボナッチ" s={11} />
    <Tool n="letter" label="テキスト" s={10} w={18} />
    <Tool n="textBox" label="ラベル" s={10} />
    <Tool n="shapes" label="矢印" s={11} menu w={22} />
    <Separator $m={1} />
    <Grip />
    {['M1', 'M5', 'M15', 'M30', 'H1', 'H4', 'D1', 'W1', 'MN'].map((t, i) => (
      <ToolButton key={t} $on={t === 'H1'} $w={i % 4 === 3 || t === 'MN' ? 18 : 19}>{t}</ToolButton>
    ))}
    <Separator $m={1} />
    <Grip />
    <Tool n="bars" label="バーチャート" on s={11} w={17} />
    <Tool n="candles" label="ローソク足" />
    <Tool n="line" label="ラインチャート" s={11} />
    <Separator $m={1} />
    <Tool n="zoomIn" label="拡大" w={18} />
    <Tool n="zoomOut" label="縮小" />
    <Tool n="tile" label="整列" />
    <Separator />
    <Tool n="scroll" label="自動スクロール" on s={11} w={17} />
    <Tool n="shift" label="チャートシフト" s={11} />
    <Separator />
    <Tool n="indicator" label="インディケータ" menu w={25} />
    <Tool n="clock" label="時間足" menu w={24} />
    <Tool n="template" label="定型チャート" menu w={25} />
    <Separator />
    <Spacer />
    <Tool n="search" label="検索" s={11} w={20} />
    <Tool n="chat" label="チャット" w={22} />
  </ToolBar>
);

const MarketWatch = () => (
  <Panel $grow>
    <PanelCaption>
      <PanelTitle>気配値表示: 03:10:35</PanelTitle>
      <CloseButton aria-label="閉じる"><Icon n="closeBold" s={6} /></CloseButton>
    </PanelCaption>
    <WhiteBox>
      <QuoteTable>
        <thead>
          <tr>
            <QuoteHead $w="65px">通貨ペア</QuoteHead>
            <QuoteHead $num $w="43px">Bid</QuoteHead>
            <QuoteHead $num>Ask</QuoteHead>
          </tr>
        </thead>
        <tbody>
          {QUOTES.map(([name, bid, ask, up, kind]) => {
            const sel = kind === 'sel';
            const c = sel ? '#eaf4ff' : up ? '#1c32c8' : '#b8283a';
            return (
              <QuoteRow key={name} $bg={ROW_BG[kind] || '#b0f2e8'}>
                <QuoteCell $sel={sel} $c={sel ? '#fff' : kind === 'off' ? '#98a8ac' : '#1e3038'}>
                  <SymbolName><Icon n={up ? 'gain' : 'loss'} s={7} />{name}</SymbolName>
                </QuoteCell>
                <QuoteCell $num $sel={sel} $c={c}>{bid}</QuoteCell>
                <QuoteCell $num $sel={sel} $c={c}>{ask}</QuoteCell>
              </QuoteRow>
            );
          })}
        </tbody>
      </QuoteTable>
    </WhiteBox>
    <PanelTabs>
      <PanelTab $on $w={60}>通貨ペアリスト</PanelTab>
      <PanelTab $small $w={57}>ティックチャート</PanelTab>
    </PanelTabs>
  </Panel>
);

const Navigator = () => (
  <Panel $gap={5}>
    <PanelCaption>
      <PanelTitle>ナビゲーター</PanelTitle>
      <CloseButton aria-label="閉じる"><Icon n="closeBold" s={6} /></CloseButton>
    </PanelCaption>
    <WhiteBox>
      <Tree>
        {TREE.map(([depth, icon, label, exp, lines]) => (
          <TreeItem key={label}>
            {Array.from({ length: depth }, (_, i) => (
              <Guide key={i} $line={lines.includes(i)} $branch={i === depth - 1}>
                {i === depth - 1 && exp && <Expander $plus={exp === '+'} aria-label={label} />}
              </Guide>
            ))}
            <Icon n={icon} s={11} />
            <TreeLabel>{label}</TreeLabel>
          </TreeItem>
        ))}
      </Tree>
      <ScrollBar>
        <ScrollButton aria-label="上へ"><Icon n="up" s={7} /></ScrollButton>
        <Thumb />
        <ScrollButton aria-label="下へ"><Icon n="down" s={7} /></ScrollButton>
      </ScrollBar>
    </WhiteBox>
    <PanelTabs>
      <PanelTab $on $w={30}>全般</PanelTab>
      <PanelTab $w={48}>お気に入り</PanelTab>
    </PanelTabs>
  </Panel>
);

const Chart = () => (
  <ChartFrame>
    <Plot>
      <PlotSvg viewBox="162 53 1085 524" preserveAspectRatio="none" role="img" aria-label="AUDUSD.pro H1">
        <path d={GRID} stroke="#878a8e" strokeWidth=".8" strokeDasharray="2 2" fill="none" />
        <path d="M162 396.500H1247" stroke="#7d868c" strokeWidth="1" />
        <path d={BARS} stroke="#50cc4a" strokeWidth="1.100" fill="none" />
      </PlotSvg>
      <ChartTitle><WhiteCaret />AUDUSD.pro,H1  0.71164 0.71232 0.71163 0.71232</ChartTitle>
      <PriceFlag>0.71232</PriceFlag>
    </Plot>
    <PriceAxis>{PRICES.map((p) => <PriceLabel key={p}>{p}</PriceLabel>)}</PriceAxis>
    <TimeAxis>{TIMES.map((t) => <TimeLabel key={t}>{t}</TimeLabel>)}</TimeAxis>
  </ChartFrame>
);

const TerminalPanel = () => (
  <Terminal>
    <TerminalRail>
      <CloseButton aria-label="閉じる"><Icon n="closeBold" s={6} /></CloseButton>
      <TerminalName>ターミナル</TerminalName>
    </TerminalRail>
    <TerminalBody>
      <OrdersBox>
        <OrdersTable>
          <thead>
            <tr>{ORDER_COLUMNS.map(([t, w], i) => <OrdersHead key={i} $w={w} $left={i === 0}>{t}</OrdersHead>)}</tr>
          </thead>
          <tbody>
            <SummaryRow>
              <SummaryCell colSpan={11}>
                <Summary><Icon n="dot" s={6} />残高: 695 461 JPY  有効証拠金: 695 461  余剰証拠金: 695 461</Summary>
              </SummaryCell>
              <SummaryCell $num>0</SummaryCell>
              <SummaryCell />
            </SummaryRow>
          </tbody>
        </OrdersTable>
      </OrdersBox>
      <PanelTabs>
        <PanelTab $on $w={30}>取引</PanelTab>
        {TERMINAL_TABS.map(([t, w, small]) => (
          <PanelTab key={t} $w={w} $small={small}>{t}{t === 'マーケット' && <Count>123</Count>}</PanelTab>
        ))}
      </PanelTabs>
    </TerminalBody>
  </Terminal>
);

export default function App() {
  return (
    <>
      <Global />
      <Window>
        <TitleBar>
          <Icon n="app" s={12} />
          <TitleText>102172581: BIGBOSSHoldings-DEMO - デモ口座 - [AUDUSD.pro,H1]</TitleText>
          <CaptionButton aria-label="最小化"><Icon n="minimize" /></CaptionButton>
          <CaptionButton aria-label="最大化"><Icon n="maximize" /></CaptionButton>
          <CaptionButton aria-label="閉じる"><Icon n="close" /></CaptionButton>
        </TitleBar>
        <MenuBar>
          <MenuButton $w={16} aria-label="システム"><Icon n="windows" s={11} /></MenuButton>
          {MENUS.map(([t, w]) => <MenuButton key={t} $w={w}>{t}</MenuButton>)}
          <Spacer />
          <MdiButton aria-label="最小化"><Icon n="minBold" s={8} /></MdiButton>
          <MdiButton aria-label="元に戻す"><Icon n="restore" s={8} /></MdiButton>
          <MdiButton aria-label="閉じる"><Icon n="closeBold" s={6} /></MdiButton>
        </MenuBar>
        <Tools />
        <Main>
          <Side>
            <MarketWatch />
            <Navigator />
          </Side>
          <Work>
            <Chart />
            <ChartTabs>
              {CHART_TABS.map(([t, w], i) => <ChartTab key={i} $w={w}>{t}</ChartTab>)}
              <ChartTab $w={20} $last>EU</ChartTab>
              <Spacer />
              <CloseButton aria-label="前へ"><Icon n="left" s={6} /></CloseButton>
              <CloseButton aria-label="次へ"><Icon n="right" s={6} /></CloseButton>
            </ChartTabs>
          </Work>
        </Main>
        <TerminalPanel />
        <StatusBar>
          <StatusCell>F1キーでヘルプが表示されます</StatusCell>
          <StatusCell $w={78}>Default</StatusCell>
          {[67, 48, 47, 45, 46, 44].map((w, i) => <StatusCell key={i} $w={w} />)}
          <StatusCell $w={98}>
            <svg width="16" height="10" viewBox="0 0 16 10" aria-hidden="true">
              <path d="M.8 0v10M2.800 0v10M4.800 0v10M6.800 0v10M8.800 0v10M10.800 0v10M12.800 0v10M14.800 0v10" stroke="#8e1420" strokeWidth="1.300" />
              <path d="M.8 0v8M2.800 0v7M4.800 0v6.500M6.800 0v5.500M8.800 0v5M10.800 0v4M12.800 0v3.500M14.800 0v3" stroke="#6f8f20" strokeWidth="1.300" />
            </svg>
            428/1 kb
            <Spacer />
            <svg width="8" height="10" viewBox="0 0 8 10" aria-hidden="true">
              <path d="M1 10L8 3M4 10l4-4" stroke="#9a9a9a" />
            </svg>
          </StatusCell>
        </StatusBar>
      </Window>
      <Highlight width="60" height="60" viewBox="0 0 60 60" aria-hidden="true">
        <circle cx="30" cy="30" r="28" fill="#eee628" fillOpacity=".84" />
        <circle cx="29.500" cy="30" r="9" fill="none" stroke="#ee8a1c" strokeWidth="3" />
        <path d="M29.500 29.500v11l2.600-2.400 1.700 3.800 1.800-.8-1.700-3.700h3.400z" fill="#fff" stroke="#222" strokeWidth=".8" />
      </Highlight>
    </>
  );
}
